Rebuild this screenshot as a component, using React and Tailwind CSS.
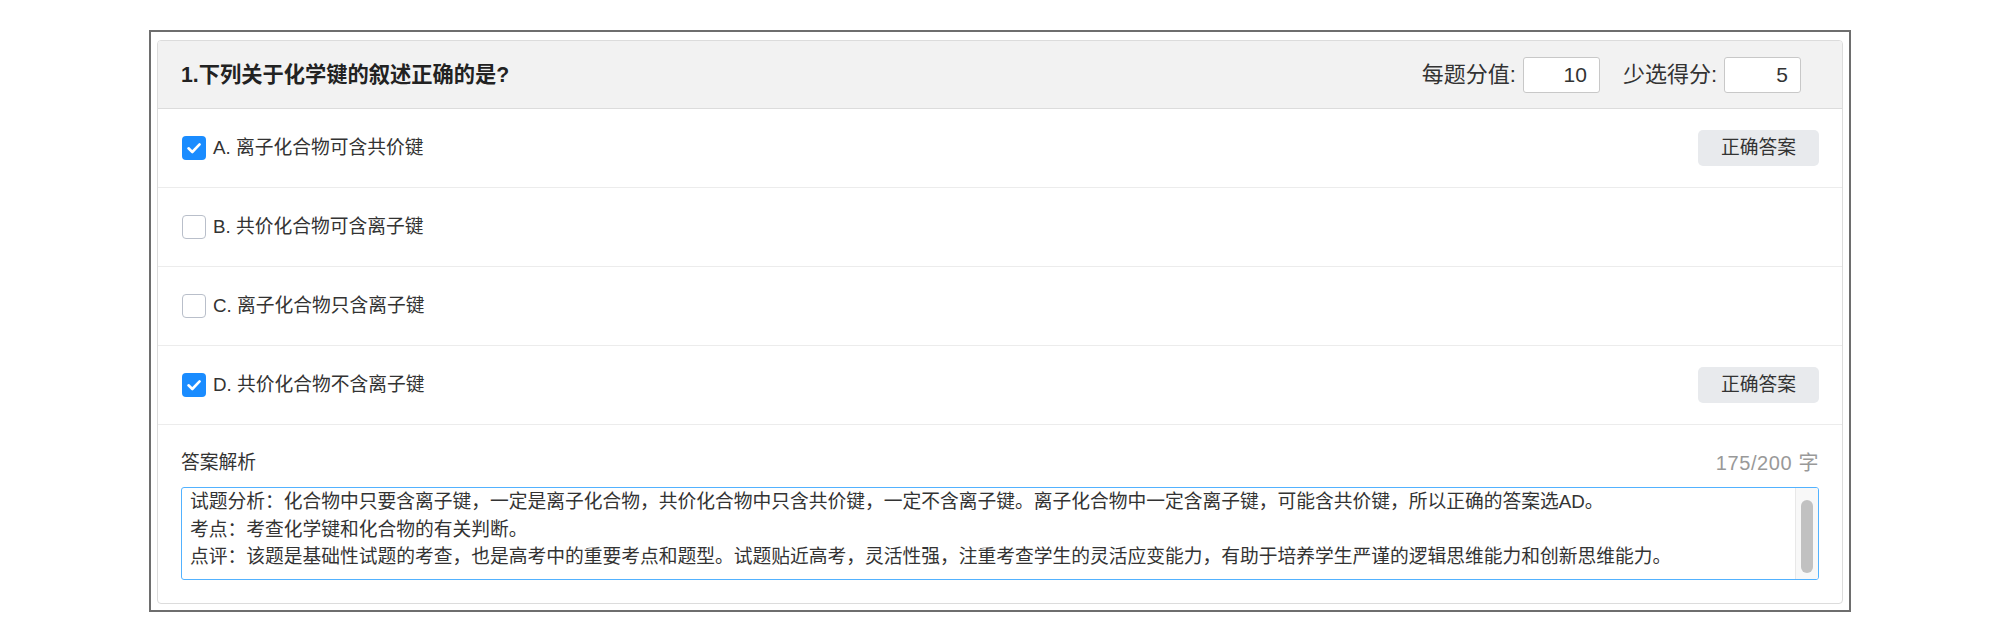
import React from "react";

const font = { fontFamily: "'Liberation Sans', 'Noto Sans CJK SC', sans-serif" };

function Check({ checked }) {
  if (checked) {
    return (
      <span className="flex h-[24px] w-[24px] shrink-0 items-center justify-center rounded-[4px] bg-[#1a8cff]">
        <svg width="16" height="16" viewBox="0 0 16 16" fill="none">
          <path d="M2.5 8.3 L6.3 12 L13.6 4.4" stroke="white" strokeWidth="2.6" strokeLinecap="round" strokeLinejoin="round" />
        </svg>
      </span>
    );
  }
  return <span className="h-[24px] w-[24px] shrink-0 rounded-[4px] border-[1.5px] border-[#b9bfca] bg-white" />;
}

const options = [
  { label: "A. 离子化合物可含共价键", checked: true },
  { label: "B. 共价化合物可含离子键", checked: false },
  { label: "C. 离子化合物只含离子键", checked: false },
  { label: "D. 共价化合物不含离子键", checked: true },
];

export default function App() {
  return (
    <div className="min-h-[643px] w-full bg-white px-[149px] pt-[30px] text-[#333]" style={font}>
      <div className="border-2 border-[#6e6e6e] px-[6px] pb-[6px] pt-[8px]">
        <div className="overflow-hidden rounded-[4px] border border-[#dcdcdc] bg-white">
          <div className="flex h-[68px] items-center justify-between border-b border-[#dcdcdc] bg-[#f2f2f2] pl-[23px] pr-[41px]">
            <div className="text-[21.25px] font-bold leading-[28px] text-[#222]">1.下列关于化学键的叙述正确的是?</div>
            <div className="flex items-center text-[22px] leading-[28px]">
              <span>每题分值:</span>
              <div className="ml-[7px] flex h-[36px] w-[77px] items-center justify-end rounded-[3px] border border-[#c8c8c8] bg-white pr-[12px] text-[21px]">10</div>
              <span className="ml-[23px]">少选得分:</span>
              <div className="ml-[7px] flex h-[36px] w-[77px] items-center justify-end rounded-[3px] border border-[#c8c8c8] bg-white pr-[12px] text-[21px]">5</div>
            </div>
          </div>
          {options.map((o) => (
            <div key={o.label} className="flex h-[79px] items-center justify-between border-b border-[#ececec] pl-[24px] pr-[23px]">
              <div className="flex items-center gap-[7px]">
                <Check checked={o.checked} />
                <span className="text-[18.75px] leading-[28px]">{o.label}</span>
              </div>
              {o.checked && (
                <div className="flex h-[36px] w-[121px] items-center justify-center rounded-[5px] bg-[#e8eaed] text-[18.75px]">正确答案</div>
              )}
            </div>
          ))}
          <div className="px-[23px] pb-[23px] pt-[24px]">
            <div className="flex items-center justify-between text-[18.75px] leading-[28px]">
              <span>答案解析</span>
              <span className="text-[20px] tracking-[0.6px] text-[#999]">175/200 字</span>
            </div>
            <div className="mt-[10px] flex h-[93px] overflow-hidden rounded-[3px] border border-[#52b2ff]">
              <div className="flex-1 overflow-hidden pl-[8px] text-[18.75px] leading-[27.5px] text-[#333]">
                <div>试题分析：化合物中只要含离子键，一定是离子化合物，共价化合物中只含共价键，一定不含离子键。离子化合物中一定含离子键，可能含共价键，所以正确的答案选AD。</div>
                <div>考点：考查化学键和化合物的有关判断。</div>
                <div>点评：该题是基础性试题的考查，也是高考中的重要考点和题型。试题贴近高考，灵活性强，注重考查学生的灵活应变能力，有助于培养学生严谨的逻辑思维能力和创新思维能力。</div>
              </div>
              <div className="flex w-[23px] shrink-0 justify-center border-l border-[#e8e8e8] bg-[#f8f8f8] pt-[12px]">
                <div className="h-[73px] w-[12px] rounded-full bg-[#c1c1c1]" />
              </div>
            </div>
          </div>
        </div>
      </div>
    </div>
  );
}
